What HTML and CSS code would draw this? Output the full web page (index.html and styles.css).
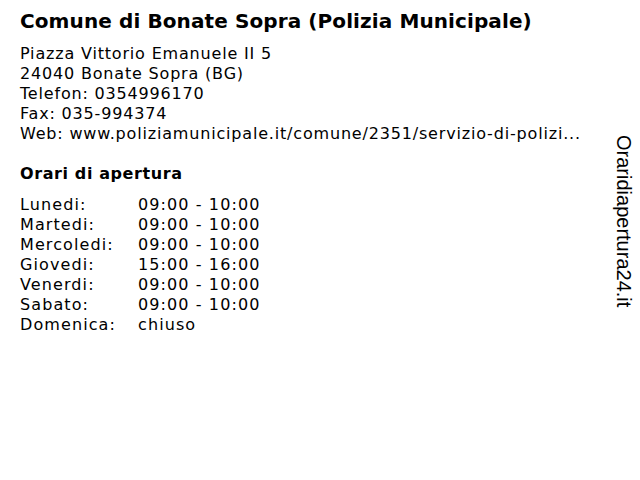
FILE: index.html
```html
<!DOCTYPE html>
<html>
<head>
<meta charset="utf-8">
<link rel="stylesheet" href="styles.css">
</head>
<body>
<div class="page">
  <h1 class="title">Comune di Bonate Sopra (Polizia Municipale)</h1>
  <div class="address">
    <div>Piazza Vittorio Emanuele II 5</div>
    <div>24040 Bonate Sopra (BG)</div>
    <div>Telefon: 0354996170</div>
    <div>Fax: 035-994374</div>
    <div>Web: www.poliziamunicipale.it/comune/2351/servizio-di-polizi...</div>
  </div>
  <h2 class="subtitle">Orari di apertura</h2>
  <div class="hours">
    <span>Lunedi:</span><span>09:00 - 10:00</span>
    <span>Martedi:</span><span>09:00 - 10:00</span>
    <span>Mercoledi:</span><span>09:00 - 10:00</span>
    <span>Giovedi:</span><span>15:00 - 16:00</span>
    <span>Venerdi:</span><span>09:00 - 10:00</span>
    <span>Sabato:</span><span>09:00 - 10:00</span>
    <span>Domenica:</span><span>chiuso</span>
  </div>
</div>
<div class="brand">Oraridiapertura24.it</div>
</body>
</html>
```
FILE: styles.css
```css
html, body { margin: 0; padding: 0; background: #fff; }
body { width: 640px; height: 480px; overflow: hidden; position: relative; color: #000; font-family: "DejaVu Sans", sans-serif; }
.page { padding: 8px 20px 0 20px; }
.title { margin: 0; font-size: 20px; font-weight: bold; line-height: 26px; letter-spacing: 0.1px; }
.address { margin-top: 10px; font-size: 16px; line-height: 20px; letter-spacing: 0.82px; }
.subtitle { margin: 20px 0 0 0; font-size: 16px; font-weight: bold; line-height: 20px; letter-spacing: 0.6px; }
.hours { margin-top: 11px; display: grid; grid-template-columns: 118px auto; font-size: 16px; line-height: 20px; letter-spacing: 1.1px; }
.brand { position: absolute; left: 612px; top: 135px; writing-mode: vertical-rl; font-family: "Liberation Sans", Arial, sans-serif; font-size: 20px; line-height: 24px; color: #000; }
```
